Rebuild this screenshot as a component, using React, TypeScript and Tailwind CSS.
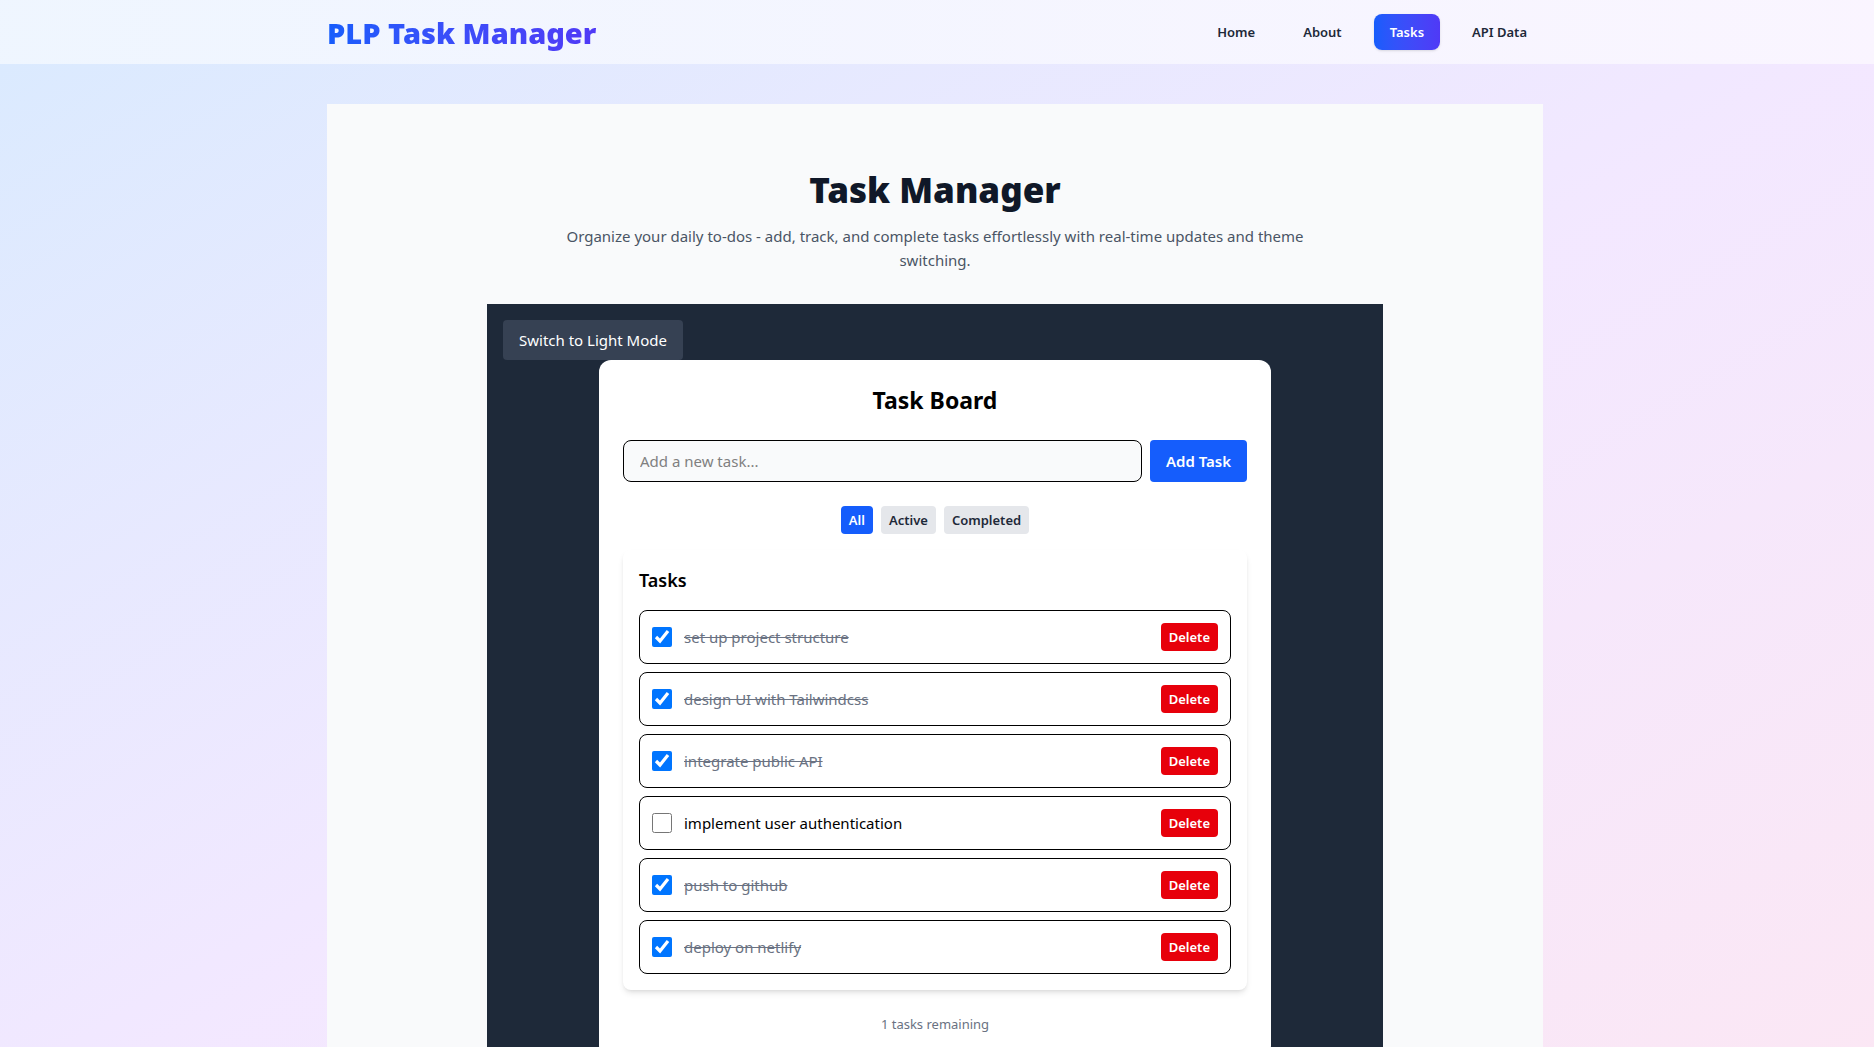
import { useState } from "react";

type Task = { id: number; text: string; done: boolean };
type Filter = "All" | "Active" | "Completed";

const initialTasks: Task[] = [
  { id: 1, text: "set up project structure", done: true },
  { id: 2, text: "design UI with Tailwindcss", done: true },
  { id: 3, text: "integrate public API", done: true },
  { id: 4, text: "implement user authentication", done: false },
  { id: 5, text: "push to github", done: true },
  { id: 6, text: "deploy on netlify", done: true },
];

const links = ["Home", "About", "Tasks", "API Data"];
const filters: Filter[] = ["All", "Active", "Completed"];

function Header() {
  return (
    <header className="bg-linear-to-r from-blue-50 to-purple-50 pr-1">
      <div className="mx-auto flex h-16 max-w-7xl items-center justify-between px-8">
        <a
          href="#home"
          className="bg-linear-to-r from-blue-600 to-indigo-600 bg-clip-text pt-0.5 text-[29px] leading-9 font-black text-transparent"
        >
          PLP Task Manager
        </a>
        <nav className="-mt-px flex gap-4 text-[13px] leading-5 font-semibold">
          {links.map((label) => (
            <a
              key={label}
              href="#"
              className={
                label === "Tasks"
                  ? "rounded-lg bg-linear-to-r from-blue-600 to-indigo-600 px-4 py-2 text-white shadow-sm"
                  : "rounded-lg px-4 py-2 text-gray-800"
              }
            >
              {label}
            </a>
          ))}
        </nav>
      </div>
    </header>
  );
}

function TaskRow({ task, onToggle, onDelete }: { task: Task; onToggle: () => void; onDelete: () => void }) {
  return (
    <li className="flex items-center justify-between rounded-lg border border-black p-3">
      <label className="flex items-center gap-3">
        <input type="checkbox" checked={task.done} onChange={onToggle} className="size-5" />
        <span className={task.done ? "text-gray-500 line-through" : "text-black"}>{task.text}</span>
      </label>
      <button
        type="button"
        onClick={onDelete}
        className="rounded-sm bg-red-600 px-2 py-1 text-[13px] leading-5 font-semibold text-white"
      >
        Delete
      </button>
    </li>
  );
}

function TaskBoard() {
  const [tasks, setTasks] = useState(initialTasks);
  const [filter, setFilter] = useState<Filter>("All");
  const [draft, setDraft] = useState("");

  const shown = tasks.filter((t) => filter === "All" || (filter === "Completed") === t.done);
  const remaining = tasks.filter((t) => !t.done).length;

  const addTask = () => {
    if (!draft.trim()) return;
    setTasks([...tasks, { id: Date.now(), text: draft.trim(), done: false }]);
    setDraft("");
  };

  return (
    <section className="mx-auto max-w-2xl rounded-xl bg-white p-6 text-black">
      <h2 className="mb-6 text-center text-[23px] leading-8 font-bold">Task Board</h2>
      <form
        className="mb-6 flex gap-2"
        onSubmit={(e) => {
          e.preventDefault();
          addTask();
        }}
      >
        <input
          type="text"
          aria-label="New task"
          placeholder="Add a new task..."
          value={draft}
          onChange={(e) => setDraft(e.target.value)}
          className="min-w-0 flex-1 rounded-lg border border-black bg-gray-50 px-4 py-2 placeholder:text-[#808080]"
        />
        <button type="submit" className="rounded-sm bg-blue-600 px-4 py-2 font-semibold text-white">
          Add Task
        </button>
      </form>
      <div className="mb-4 flex justify-center gap-2 text-[13px] leading-5 font-semibold">
        {filters.map((f) => (
          <button
            key={f}
            type="button"
            onClick={() => setFilter(f)}
            className={
              f === filter
                ? "rounded-sm bg-blue-600 px-2 py-1 text-white"
                : "rounded-sm bg-gray-200 px-2 py-1 text-gray-800"
            }
          >
            {f}
          </button>
        ))}
      </div>
      <div className="rounded-lg bg-white p-4 shadow-md">
        <h3 className="mb-4 text-[18px] leading-7 font-semibold">Tasks</h3>
        <ul className="flex flex-col gap-2">
          {shown.map((t) => (
            <TaskRow
              key={t.id}
              task={t}
              onToggle={() => setTasks(tasks.map((o) => (o.id === t.id ? { ...o, done: !o.done } : o)))}
              onDelete={() => setTasks(tasks.filter((o) => o.id !== t.id))}
            />
          ))}
        </ul>
      </div>
      <p className="mt-6 text-center text-[13px] leading-5 text-gray-500">{remaining} tasks remaining</p>
    </section>
  );
}

export default function App() {
  return (
    <div className="h-screen overflow-y-auto font-['Noto_Sans','Open_Sans',sans-serif] text-[15px] leading-6 [scrollbar-width:none]">
      <Header />
      <main className="bg-linear-to-br from-blue-100 via-purple-100 to-pink-100 py-10 pr-1">
        <div className="mx-auto max-w-7xl px-8">
          <div className="bg-gray-50 py-16">
            <div className="mx-auto max-w-4xl">
              <div className="mx-auto mb-8 max-w-3xl text-center">
                <h1 className="mb-3 text-[35px] leading-11 font-black text-gray-900">Task Manager</h1>
                <p className="text-gray-600">
                  Organize your daily to-dos - add, track, and complete tasks effortlessly with real-time updates and
                  theme switching.
                </p>
              </div>
              <div className="bg-gray-800 p-4">
                <button type="button" className="block rounded-sm bg-gray-700 px-4 py-2 text-white">
                  Switch to Light Mode
                </button>
                <TaskBoard />
              </div>
            </div>
          </div>
        </div>
      </main>
    </div>
  );
}
